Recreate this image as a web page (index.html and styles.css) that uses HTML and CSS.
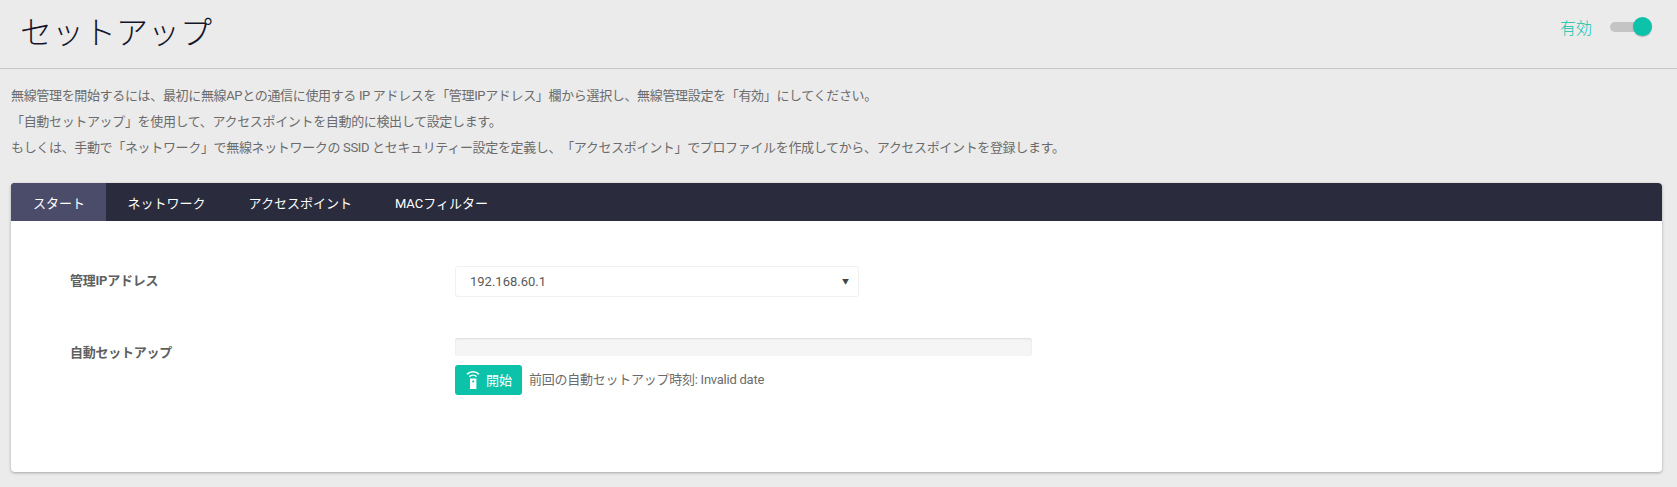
FILE: index.html
```html
<!DOCTYPE html>
<html lang="ja">
<head>
<meta charset="utf-8">
<title>セットアップ</title>
<link rel="stylesheet" href="styles.css">
</head>
<body>
<header class="page-header">
  <h1 class="title">セットアップ</h1>
  <div class="status">
    <span class="status-label">有効</span>
    <span class="toggle"><span class="toggle-knob"></span></span>
  </div>
</header>
<section class="intro">
  <p>無線管理を開始するには、最初に無線APとの通信に使用する IP アドレスを「管理IPアドレス」欄から選択し、無線管理設定を「有効」にしてください。</p>
  <p>「自動セットアップ」を使用して、アクセスポイントを自動的に検出して設定します。</p>
  <p>もしくは、手動で「ネットワーク」で無線ネットワークの SSID とセキュリティー設定を定義し、「アクセスポイント」でプロファイルを作成してから、アクセスポイントを登録します。</p>
</section>
<main class="card">
  <nav class="tabs">
    <a class="tab active">スタート</a>
    <a class="tab">ネットワーク</a>
    <a class="tab">アクセスポイント</a>
    <a class="tab">MACフィルター</a>
  </nav>
  <div class="card-body">
    <div class="row row-ip">
      <label class="row-label">管理IPアドレス</label>
      <div class="select"><span>192.168.60.1</span><span class="caret">▼</span></div>
    </div>
    <div class="row row-auto">
      <label class="row-label">自動セットアップ</label>
      <div class="auto-col">
        <div class="progress"></div>
        <div class="action">
          <button class="btn" type="button">
            <svg class="btn-icon" width="14" height="20" viewBox="0 0 14 20" aria-hidden="true">
              <path d="M1 5.2C4.4 1.9 9.6 1.9 13 5.2" fill="none" stroke="#fff" stroke-width="1.6"/>
              <path d="M3.4 7.6C5.4 5.8 8.6 5.8 10.6 7.6" fill="none" stroke="#fff" stroke-width="1.6"/>
              <path d="M4 9.5h6.4V20H4z" fill="#fff"/>
              <circle cx="7.2" cy="12.5" r="1.1" fill="#0cc3aa"/>
            </svg>
            <span>開始</span>
          </button>
          <span class="last-run">前回の自動セットアップ時刻: Invalid date</span>
        </div>
      </div>
    </div>
  </div>
</main>
</body>
</html>
```
FILE: styles.css
```css
* { box-sizing: border-box; }
html, body { margin: 0; padding: 0; }
body {
  background: #ebebeb;
  color: #6b6b6b;
  font-family: Roboto, "Noto Sans CJK JP", sans-serif;
  font-size: 13px;
  height: 487px;
  overflow: hidden;
}
.page-header {
  height: 69px;
  border-bottom: 1px solid #c8c8c8;
  display: flex;
  justify-content: space-between;
  align-items: flex-start;
  padding: 0 27px 0 20px;
}
.title {
  margin: 11px 0 0;
  font-size: 32px;
  font-weight: 300;
  line-height: 44px;
  color: #14152a;
}
.status {
  display: flex;
  align-items: center;
  gap: 18px;
  margin-top: 15px;
  height: 24px;
}
.status-label { color: #0cc3aa; font-size: 16px; font-weight: 300; }
.toggle {
  position: relative;
  display: block;
  width: 40px;
  height: 10px;
  border-radius: 5px;
  background: #c4c4c4;
}
.toggle-knob {
  position: absolute;
  right: -2px;
  top: -5px;
  width: 19px;
  height: 19px;
  border-radius: 50%;
  background: #0cc3aa;
  box-shadow: 0 1px 1px rgba(0, 0, 0, .25);
}
.intro {
  padding: 14px 11px 0;
  height: 114px;
  letter-spacing: -.34px;
  text-spacing-trim: space-all;
}
.intro p { margin: 0; line-height: 26px; }
.card {
  margin: 0 15px 0 11px;
  height: 289px;
  background: #fff;
  border-radius: 4px;
  box-shadow: 0 1px 3px rgba(0, 0, 0, .3);
  overflow: hidden;
}
.tabs {
  display: flex;
  height: 38px;
  background: #2a2b3d;
}
.tab {
  display: flex;
  align-items: center;
  padding: 0 21.5px;
  color: #fff;
  font-size: 13px;
}
.tab.active { background: #4a4c6a; padding: 0 21px 0 22px; }
.card-body { padding: 0 59px; }
.row { display: flex; }
.row-ip { padding-top: 45px; }
.row-auto { padding-top: 41px; }
.row-label {
  width: 385px;
  font-weight: 700;
  color: #5f5f5f;
  line-height: 30px;
  letter-spacing: -.25px;
}
.select {
  width: 404px;
  height: 31px;
  padding: 0 9px 0 14px;
  display: flex;
  justify-content: space-between;
  align-items: center;
  border: 1px solid #f1f1f1;
  border-radius: 3px;
  color: #5a5a5a;
}
.caret { font-size: 7px; color: #444; margin-top: -2px; }
.auto-col { width: 577px; }
.progress {
  height: 18px;
  background: #f5f5f5;
  border-radius: 3px;
  box-shadow: inset 0 1px 2px rgba(0, 0, 0, .1);
}
.action {
  display: flex;
  align-items: center;
  gap: 7px;
  margin-top: 9px;
}
.btn {
  width: 67px;
  height: 30px;
  padding: 0 0 0 11px;
  display: flex;
  align-items: center;
  gap: 6px;
  border: 0;
  border-radius: 3px;
  background: #0cc3aa;
  color: #fff;
  font: 400 13px Roboto, "Noto Sans CJK JP", sans-serif;
}
.btn-icon { flex: none; margin-bottom: 3px; }
.btn span { margin-top: -2px; }
.last-run { color: #6b6b6b; letter-spacing: -.25px; margin-bottom: 4px; }
```
